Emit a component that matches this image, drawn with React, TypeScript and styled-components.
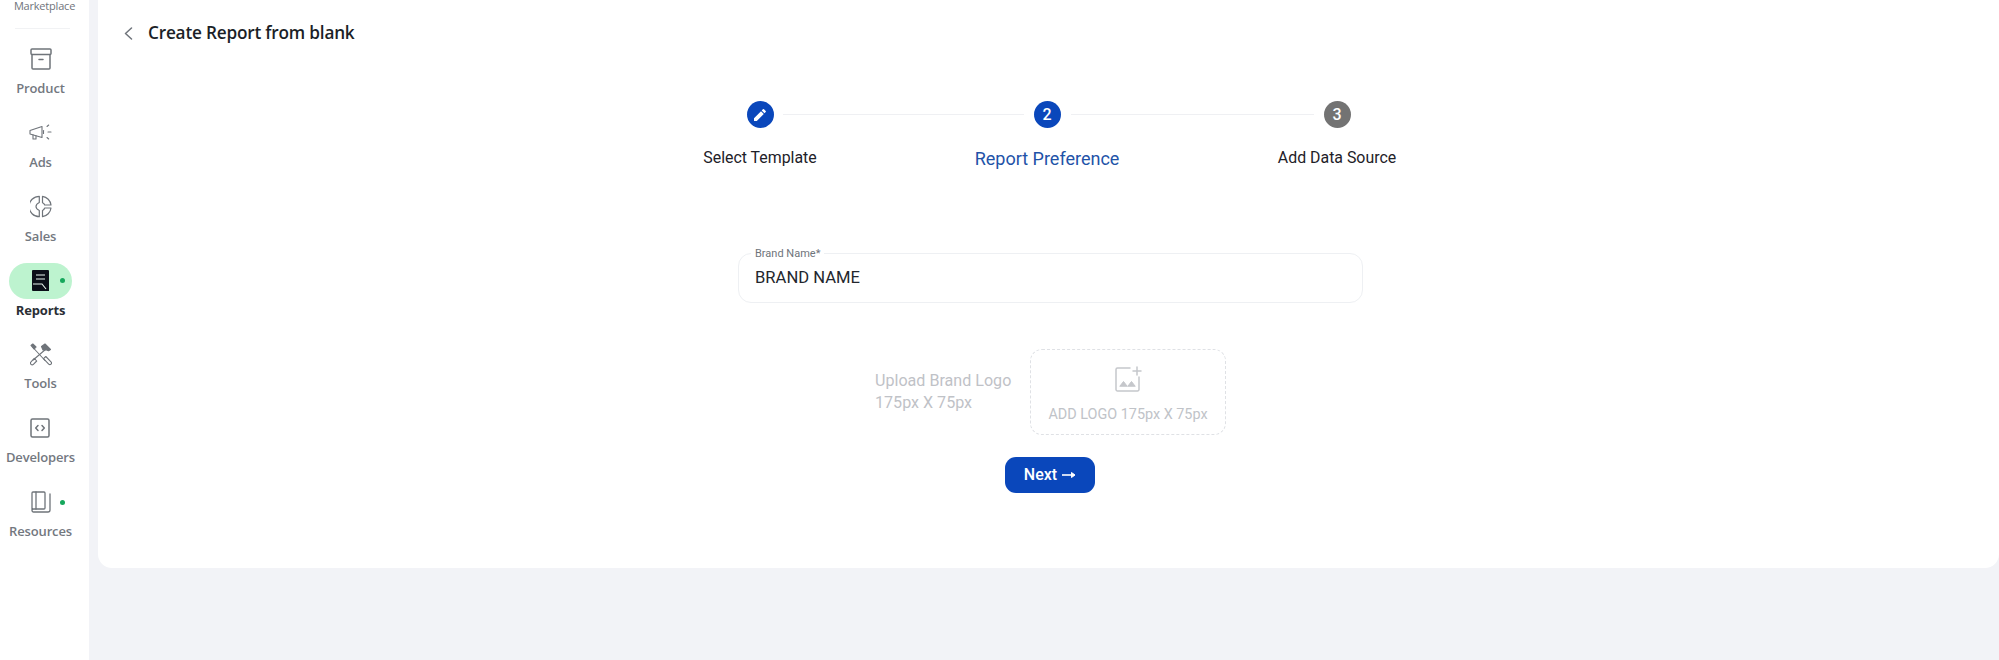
import React from "react";
import styled, { createGlobalStyle } from "styled-components";

const Global = createGlobalStyle`
  html, body { margin: 0; padding: 0; background: #f2f3f7; }
  body { font-family: "Lato", "Liberation Sans", sans-serif; overflow: hidden; }
  * { box-sizing: border-box; }
`;

const Page = styled.div`
  display: flex;
  width: 1999px;
  height: 660px;
  background: #f2f3f7;
`;

const Sidebar = styled.nav`
  width: 89px;
  flex: none;
  background: #fff;
  display: flex;
  flex-direction: column;
  align-items: center;
  overflow: hidden;
`;

const SideHead = styled.div`
  width: 55px;
  height: 29px;
  border-bottom: 1px solid #f1f2f4;
  margin: 0 4px 12px 0;
  display: flex;
  justify-content: center;
  font: 400 11px/11px "Open Sans", sans-serif;
  letter-spacing: -0.2px;
  color: #6f747b;
  white-space: nowrap;
  padding-left: 4px;
`;

const SideList = styled.div`
  display: flex;
  flex-direction: column;
  gap: 18.85px;
  width: 100%;
  align-items: center;
  padding-right: 8px;
`;

const SideItem = styled.div`
  display: flex;
  flex-direction: column;
  align-items: center;
  height: 55px;
`;

const IconPill = styled.div<{ $active?: boolean; $dot?: boolean }>`
  position: relative;
  width: 63px;
  height: 36px;
  border-radius: 18px;
  background: ${(p) => (p.$active ? "#bdf3cf" : "transparent")};
  display: flex;
  align-items: center;
  justify-content: center;
  color: #6f747a;
  ${(p) =>
    p.$dot &&
    `&::after {
      content: "";
      position: absolute;
      left: 51px;
      top: 15.5px;
      width: 5px;
      height: 5px;
      border-radius: 50%;
      background: #16a75c;
    }`}
`;

const SideLabel = styled.span<{ $active?: boolean }>`
  margin-top: 3px;
  font-size: 13px;
  line-height: 16px;
  font-family: "Open Sans", sans-serif;
  letter-spacing: -0.15px;
  font-weight: ${(p) => (p.$active ? 700 : 600)};
  color: ${(p) => (p.$active ? "#2b2f36" : "#73787f")};
  white-space: nowrap;
`;

const Main = styled.main`
  flex: 1;
  padding-left: 9px;
  min-width: 0;
`;

const Panel = styled.section`
  height: 568px;
  background: #fff;
  border-radius: 0 0 14px 14px;
  display: flex;
  flex-direction: column;
  position: relative;
`;

const TitleRow = styled.header`
  display: flex;
  align-items: center;
  height: 66px;
  padding-left: 26px;
  gap: 15px;
  color: #6f747b;
`;

const Title = styled.h1`
  margin: 0;
  font: 600 17.2px/24px "Open Sans", sans-serif;
  letter-spacing: -0.2px;
  color: #1b1f27;
`;

const Stepper = styled.div`
  display: flex;
  align-items: flex-start;
  padding-left: 662px;
  height: 127px;
  margin-top: 35px;
`;

const Step = styled.div`
  position: relative;
  display: flex;
  flex-direction: column;
  align-items: center;
  width: 0;
`;

const StepGap = styled.div<{ $w: number }>`
  flex: none;
  width: ${(p) => p.$w}px;
`;

const Circle = styled.div<{ $bg: string }>`
  width: 27px;
  height: 27px;
  border-radius: 50%;
  background: ${(p) => p.$bg};
  color: #fff;
  flex: none;
  display: flex;
  align-items: center;
  justify-content: center;
  font: 500 16px/1 "Roboto", sans-serif;
`;

const StepLabel = styled.div<{ $active?: boolean }>`
  margin-top: ${(p) => (p.$active ? "20px" : "19px")};
  font: 400 ${(p) => (p.$active ? "18px" : "15.9px")}/22px "Roboto", sans-serif;
  color: ${(p) => (p.$active ? "#1f53a8" : "#1e2128")};
  white-space: nowrap;
`;

const Connector = styled.div<{ $w: number }>`
  height: 1px;
  width: ${(p) => p.$w}px;
  background: #eff0f3;
  margin-top: 13px;
  flex: none;
`;

const FieldWrap = styled.div`
  position: relative;
  width: 625px;
  height: 50px;
  margin: 25px 0 0 640px;
  border: 1px solid #eef0f3;
  border-radius: 13px;
  display: flex;
  align-items: center;
  padding: 0 16px 1px;
`;

const FieldLabel = styled.label`
  position: absolute;
  left: 12px;
  top: -7px;
  padding: 0 4px;
  background: #fff;
  font: 400 11px/13px "Roboto", sans-serif;
  color: #6f747b;
`;

const FieldValue = styled.span`
  font: 400 16.6px/20px "Roboto", sans-serif;
  color: #23262d;
`;

const UploadRow = styled.div`
  display: flex;
  align-items: flex-start;
  margin: 46px 0 0 777px;
  gap: 19px;
`;

const UploadText = styled.div`
  width: 136px;
  padding-top: 21px;
  font: 400 16.1px/22px "Roboto", sans-serif;
  color: #bfc2c7;
  white-space: nowrap;
`;

const DropZone = styled.div`
  width: 196px;
  height: 86px;
  border: 1px dashed #dfe1e5;
  border-radius: 12px;
  display: flex;
  flex-direction: column;
  align-items: center;
  padding-top: 16px;
`;

const DropText = styled.div`
  margin-top: 14px;
  font: 400 14.4px/18px "Roboto", sans-serif;
  color: #c0c3c8;
  white-space: nowrap;
`;

const NextButton = styled.button`
  width: 90px;
  height: 36px;
  margin: 22px 0 0 907px;
  border: 0;
  border-radius: 11px;
  background: #0a47bb;
  color: #fff;
  font: 500 16px/20px "Roboto", sans-serif;
  display: flex;
  align-items: center;
  justify-content: center;
  gap: 5px;
  padding: 0;
`;

const S = { fill: "none", stroke: "currentColor", strokeWidth: 1.5, strokeLinecap: "round", strokeLinejoin: "round" } as const;

const ProductIcon = () => (
  <svg width="22" height="22" viewBox="0 0 22 22" {...S}>
    <rect x="1" y="1" width="20" height="5.5" rx="1" />
    <path d="M2 6.500V20a1 1 0 0 0 1 1h16a1 1 0 0 0 1-1V6.500" />
    <path d="M9 11.500h4" />
  </svg>
);
const AdsIcon = () => (
  <svg width="23" height="18" viewBox="0 0 23 18" {...S} strokeWidth={1.1}>
    <path d="M1 6.500 13 2.500v11L1 10z" />
    <path d="M4 10.700v4.300h3v-3.300" />
    <path d="M14.500 6.500v3" />
    <path d="M18 2.500 19.700 1M19 8h3M18 13.500l1.700 1.500" />
  </svg>
);
const SalesIcon = () => (
  <svg width="22" height="23" viewBox="0 0 22 23" {...S} strokeWidth={1.2}>
    <path d="M9.300 1.300A10 10 0 0 0 9.300 21.700V15.500C7.200 14.500 6 13 6 11.500S7.200 8.500 9.300 7.500z" />
    <path d="M12.500 1.300A10 10 0 0 1 21 10h-6.300c-.4-1-1.200-1.700-2.200-2.200z" />
    <path d="M21 13a10 10 0 0 1-8.500 8.700V15.500c1-.5 1.800-1.400 2.200-2.500z" />
  </svg>
);
const ReportsIcon = () => (
  <svg width="17" height="21" viewBox="0 0 17 21">
    <path d="M1 0h15a1 1 0 0 1 1 1v20H1a1 1 0 0 1-1-1V1a1 1 0 0 1 1-1z" fill="#0b0f18" />
    <path d="M4 5h9M4 9h9M1 14h9l4 5" fill="none" stroke="#e8f5ee" strokeWidth="1.100" />
  </svg>
);
const ToolsIcon = () => (
  <svg width="22" height="23" viewBox="0 0 22 23" {...S} strokeWidth={1.1}>
    <path d="M3 4.500 15 17.500" />
    <path d="M1 2.500 2.800 1 6 4 4 6z" fill="currentColor" />
    <path d="M13.500 15.700 15.800 13.500 21 18.800a1.600 1.600 0 0 1-2.300 2.300z" />
    <path d="M16 6 3.200 17" />
    <path d="M11.500 3.500 15 1l5.500 5.500-2 1.300-2.500-1-3 .2z" fill="currentColor" />
    <path d="M4.300 15.300 6.700 18 3.400 21.300a1.600 1.600 0 0 1-2.400-2.400z" />
  </svg>
);
const DevIcon = () => (
  <svg width="20" height="20" viewBox="0 0 20 20" {...S}>
    <rect x="1" y="1" width="18" height="18" rx="1.500" />
    <path d="M8 7.500 5.700 10 8 12.500M12 7.500 14.300 10 12 12.500" />
  </svg>
);
const BookIcon = () => (
  <svg width="20" height="22" viewBox="0 0 20 22" {...S} strokeWidth={1.3}>
    <path d="M19 3v16a2 2 0 0 1-2 2H2.500A1.500 1.500 0 0 1 1 19.500V2a1 1 0 0 1 1-1h11a1 1 0 0 1 1 1v15a1 1 0 0 1-1 1H2.500A1.500 1.500 0 0 0 1 19.500" />
    <path d="M5 1v17" />
  </svg>
);
const Chevron = () => (
  <svg width="9" height="13" viewBox="0 0 9 13" {...S}>
    <path d="M7.500 1 1.500 6.500 7.500 12" />
  </svg>
);
const Pencil = () => (
  <svg width="14" height="14" viewBox="0 0 14 14" fill="#fff">
    <path d="M1 10.200V13h2.800l7-7L8 3.200zM12.700 4.100a.8.800 0 0 0 0-1.100L11 1.300a.8.800 0 0 0-1.100 0L8.700 2.500l2.800 2.800z" />
  </svg>
);
const AddImage = () => (
  <svg width="27" height="26" viewBox="0 0 27 26" fill="none" stroke="#c5c7cb" strokeWidth="1.500" strokeLinecap="round">
    <path d="M15 2H2.500A1.500 1.500 0 0 0 1 3.500v20A1.500 1.500 0 0 0 2.500 25h20a1.500 1.500 0 0 0 1.500-1.500V11" />
    <path d="M22 1v8M18 5h8" />
    <path d="M5 20l3.500-4.500L12 20zM13 20l3.500-4.500L20 20z" fill="#c5c7cb" strokeWidth="1" />
  </svg>
);
const ArrowIcon = () => (
  <svg width="14" height="10" viewBox="0 0 14 10" fill="none" stroke="#fff" strokeWidth="1.600">
    <path d="M0 5h12" />
    <path d="M9.500 2.500 13 5 9.500 7.500z" fill="#fff" strokeWidth="1" />
  </svg>
);

const navItems = [
  { label: "Product", icon: <ProductIcon /> },
  { label: "Ads", icon: <AdsIcon /> },
  { label: "Sales", icon: <SalesIcon /> },
  { label: "Reports", icon: <ReportsIcon />, active: true, dot: true },
  { label: "Tools", icon: <ToolsIcon /> },
  { label: "Developers", icon: <DevIcon /> },
  { label: "Resources", icon: <BookIcon />, dot: true },
];

export default function App() {
  return (
    <>
      <Global />
      <Page>
        <Sidebar>
          <SideHead>Marketplace</SideHead>
          <SideList>
            {navItems.map((n) => (
              <SideItem key={n.label}>
                <IconPill $active={n.active} $dot={n.dot}>{n.icon}</IconPill>
                <SideLabel $active={n.active}>{n.label}</SideLabel>
              </SideItem>
            ))}
          </SideList>
        </Sidebar>
        <Main>
          <Panel>
            <TitleRow>
              <Chevron />
              <Title>Create Report from blank</Title>
            </TitleRow>
            <Stepper>
              <Step>
                <Circle $bg="#0a47bb"><Pencil /></Circle>
                <StepLabel>Select Template</StepLabel>
              </Step>
              <StepGap $w={23} />
              <Connector $w={241} />
              <StepGap $w={23} />
              <Step>
                <Circle $bg="#0a47bb">2</Circle>
                <StepLabel $active>Report Preference</StepLabel>
              </Step>
              <StepGap $w={24} />
              <Connector $w={243} />
              <StepGap $w={23} />
              <Step>
                <Circle $bg="#737373">3</Circle>
                <StepLabel>Add Data Source</StepLabel>
              </Step>
            </Stepper>
            <FieldWrap>
              <FieldLabel>Brand Name*</FieldLabel>
              <FieldValue>BRAND NAME</FieldValue>
            </FieldWrap>
            <UploadRow>
              <UploadText>Upload Brand Logo<br />175px X 75px</UploadText>
              <DropZone>
                <AddImage />
                <DropText>ADD LOGO 175px X 75px</DropText>
              </DropZone>
            </UploadRow>
            <NextButton>Next <ArrowIcon /></NextButton>
          </Panel>
        </Main>
      </Page>
    </>
  );
}
